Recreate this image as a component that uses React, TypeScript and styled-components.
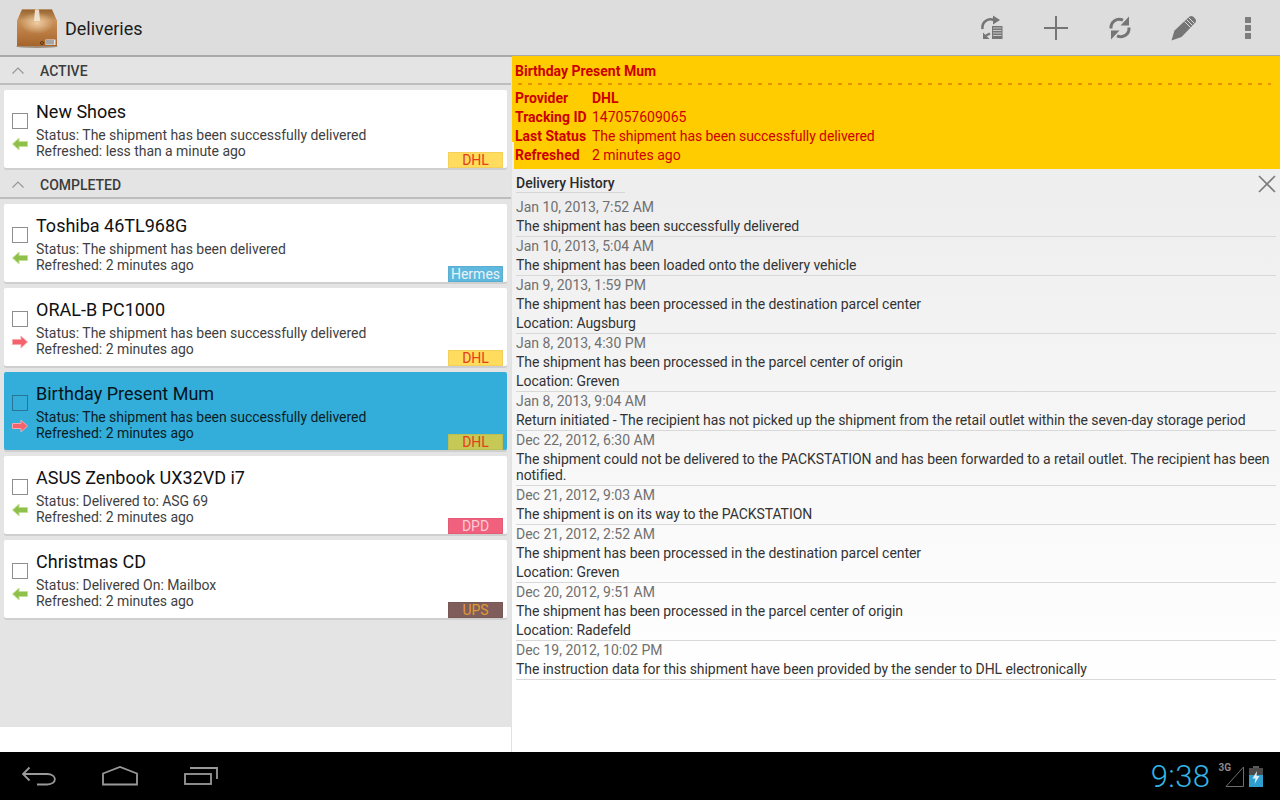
import React from 'react';
import styled, { createGlobalStyle } from 'styled-components';

const GlobalStyle = createGlobalStyle`
    html, body {
        margin: 0;
        padding: 0;
        background: #fff;
    }
    body {
        font-family: Roboto, "Liberation Sans", sans-serif;
    }
`;

const Screen = styled.div`
    width: 1280px;
    height: 800px;
    display: flex;
    flex-direction: column;
    overflow: hidden;
`;

const ActionBar = styled.header`
    height: 55px;
    flex: none;
    display: flex;
    align-items: center;
    padding-left: 15px;
    background: #dddddd;
    border-bottom: 2px solid #a9a9a9;
    position: relative;
    z-index: 2;
`;

const AppTitle = styled.h1`
    margin: 2px 0 0 6px;
    font-size: 18px;
    font-weight: 400;
    color: #1c1c1c;
    flex: 1;
`;

const ActionButton = styled.button`
    width: 64px;
    height: 55px;
    padding: 0;
    border: 0;
    background: none;
    display: flex;
    align-items: center;
    justify-content: center;
`;

const Actions = styled.div`
    display: flex;
`;

const Main = styled.main`
    flex: 1;
    display: flex;
    min-height: 0;
`;

const LeftPane = styled.section`
    width: 511px;
    flex: none;
    display: flex;
    flex-direction: column;
    background: #fff;
    border-right: 1px solid #e2e2e2;
`;

const ListArea = styled.div`
    height: 670px;
    background: #e4e4e4;
`;

const SectionHeader = styled.div`
    box-sizing: border-box;
    height: 28px;
    padding: 1px 0 0 12px;
    display: flex;
    align-items: center;
    gap: 16px;
    background: #e4e4e4;
    border-bottom: 2px solid #bdbdbd;
    font-size: 14px;
    font-weight: 500;
    color: #3c3c3c;
    margin-bottom: 5px;
`;

const Card = styled.article<{ $selected?: boolean }>`
    position: relative;
    height: 78px;
    margin: 0 4px 6px 4px;
    background: ${p => (p.$selected ? '#33add9' : '#fff')};
    border-radius: 2px;
    box-shadow: 0 2px 0 #cfcfcf;
    display: flex;
    color: ${p => (p.$selected ? '#0a1d26' : '#3f3f3f')};
`;

const CardSection = styled.div`
    & > ${Card}:last-child {
        margin-bottom: 3px;
    }
`;

const MarkerColumn = styled.div`
    width: 32px;
    flex: none;
    display: flex;
    flex-direction: column;
    align-items: center;
    padding-top: 23px;
    gap: 8px;
`;

const Checkbox = styled.span<{ $selected?: boolean }>`
    display: block;
    width: 14px;
    height: 14px;
    border: 1px solid ${p => (p.$selected ? '#2a7595' : '#8e8e8e')};
`;

const CardBody = styled.div`
    flex: 1;
    padding-top: 10px;
`;

const CardTitle = styled.div<{ $selected?: boolean }>`
    font-size: 18px;
    line-height: 24px;
    color: ${p => (p.$selected ? '#06141b' : '#111')};
    margin-bottom: 3px;
`;

const CardLine = styled.div`
    font-size: 14px;
    line-height: 16px;
    letter-spacing: -0.04px;
`;

const ProviderTag = styled.span<{ $bg: string; $fg: string }>`
    position: absolute;
    right: 4px;
    bottom: 0;
    width: 55px;
    height: 16px;
    background: ${p => p.$bg};
    box-shadow: inset 0 0 0 1px rgba(0, 0, 0, 0.05);
    color: ${p => p.$fg};
    font-size: 14px;
    line-height: 17px;
    text-align: center;
`;

const RightPane = styled.section`
    flex: 1;
    min-width: 0;
    display: flex;
    flex-direction: column;
    background: linear-gradient(#eeeeee 0%, #eeeeee 20%, #ffffff 90%);
`;

const SummaryPanel = styled.div`
    position: relative;
    z-index: 3;
    box-sizing: border-box;
    height: 113px;
    flex: none;
    margin-top: -1px;
    padding: 6px 0 0 3px;
    background: #ffcc00;
    color: #cc0000;
    font-size: 14px;

    &::after {
        content: '';
        position: absolute;
        left: 0;
        bottom: 0;
        width: 2px;
        height: 27px;
        background: #f0f0f0;
    }
`;

const SummaryTitle = styled.div`
    font-weight: 700;
    line-height: 18px;
`;

const SummaryDivider = styled.div`
    height: 2px;
    margin: 3px 9px 4px 3px;
    background: repeating-linear-gradient(90deg, #ea8f08 0 4px, transparent 4px 10px);
`;

const SummaryRow = styled.div`
    display: flex;
    line-height: 19px;
`;

const SummaryLabel = styled.span`
    width: 77px;
    flex: none;
    font-weight: 700;
`;

const SummaryValue = styled.span<{ $bold?: boolean; $tight?: boolean }>`
    font-weight: ${p => (p.$bold ? 700 : 400)};
    letter-spacing: ${p => (p.$tight ? '-0.07px' : '0')};
`;

const HistoryArea = styled.div`
    position: relative;
    padding: 5px 4px 0 4px;
`;

const HistoryHeading = styled.div`
    width: 109px;
    font-size: 14px;
    font-weight: 500;
    line-height: 18px;
    color: #2c2c2c;
    border-bottom: 1px solid #d6d6d6;
    margin-bottom: 5px;
`;

const CloseButton = styled.button`
    position: absolute;
    top: 5px;
    right: 3px;
    width: 20px;
    height: 20px;
    padding: 0;
    border: 0;
    background: none;
`;

const HistoryRow = styled.div`
    border-bottom: 1px solid #d9d9d9;
    font-size: 14px;
`;

const HistoryDate = styled.div`
    line-height: 19px;
    color: #707070;
`;

const HistoryText = styled.div`
    line-height: 16px;
    padding: 1px 0 2px;
    color: #333;
    letter-spacing: -0.06px;
`;

const NavBar = styled.footer`
    height: 48px;
    flex: none;
    background: #000;
    display: flex;
    align-items: center;
    padding-left: 22px;
`;

const NavButton = styled.div<{ $width: number }>`
    width: ${p => p.$width}px;
    display: flex;
    align-items: center;
`;

const StatusArea = styled.div`
    margin-left: auto;
    display: flex;
    align-items: center;
    padding-right: 17px;
`;

const Clock = styled.span`
    font-size: 31px;
    color: #33b5e5;
    font-weight: 300;
    letter-spacing: 0.4px;
    margin-right: 8px;
`;

const ThreeG = styled.span`
    font-size: 10px;
    font-weight: 700;
    color: #8a8a8a;
    align-self: flex-start;
    margin: 4px -6px 0 0;
    position: relative;
`;

const BatteryWrap = styled.span`
    display: flex;
    margin-left: 5px;
`;

const BoxLogo = () => (
    <svg width="44" height="44" viewBox="0 0 44 44">
        <defs>
            <linearGradient id="boxFront" x1="0" y1="0" x2="0" y2="1">
                <stop offset="0" stopColor="#d8a46c" />
                <stop offset="1" stopColor="#a7642a" />
            </linearGradient>
            <linearGradient id="boxTop" x1="0" y1="0" x2="0" y2="1">
                <stop offset="0" stopColor="#96622e" />
                <stop offset="1" stopColor="#c8965e" />
            </linearGradient>
            <radialGradient id="boxGlow" cx="0.5" cy="0.5" r="0.5">
                <stop offset="0" stopColor="#f6d8b0" stopOpacity="0.85" />
                <stop offset="1" stopColor="#f6d8b0" stopOpacity="0" />
            </radialGradient>
        </defs>
        <ellipse cx="22" cy="40.5" rx="21" ry="1.5" fill="#6b4a2a" opacity="0.55" />
        <path d="M2 15 L7 3.5 H37 L42 15 V40 H2 Z" fill="url(#boxFront)" />
        <path d="M2 15 L7 3.5 H37 L42 15 Z" fill="url(#boxTop)" />
        <ellipse cx="22" cy="17" rx="17" ry="11" fill="url(#boxGlow)" />
        <path d="M20 3.5 H24 L25 15 H19 Z" fill="#f3e8d8" opacity="0.9" />
        <rect x="30.5" y="33.5" width="10" height="5.5" fill="#e6e6e6" />
        <path d="M32 34 V38.5 M34 34 V38.5 M36 34 V38.5 M38 34 V38.5" stroke="#666" strokeWidth="1" />
        <circle cx="27" cy="37" r="1.5" fill="none" stroke="#5a3414" strokeWidth="1" />
    </svg>
);

const RefreshListIcon = () => (
    <svg width="26" height="26" viewBox="0 0 26 26" fill="none">
        <path d="M3.5 14 C2.5 7 9 2.5 15 5" stroke="#757575" strokeWidth="2.6" />
        <path d="M14 0.5 L21 5 L14 9.5 Z" fill="#757575" />
        <rect x="13" y="11" width="10.5" height="13" fill="#757575" />
        <path d="M14 13 H22.5 M14 15.5 H22.5 M14 18 H22.5 M14 20.5 H22.5" stroke="#dddddd" strokeWidth="0.8" />
        <path d="M4 24 L4 17.5 L10.5 24 Z" fill="#757575" />
        <path d="M7 20.5 L11 18.5" stroke="#757575" strokeWidth="2.2" />
    </svg>
);

const PlusIcon = () => (
    <svg width="24" height="24" viewBox="0 0 24 24">
        <path d="M12 0 V24 M0 12 H24" stroke="#757575" strokeWidth="2" />
    </svg>
);

const SyncIcon = () => (
    <svg width="22" height="24" viewBox="0 0 22 24" fill="none">
        <path d="M2 12.5 C1.5 5.5 8 1.5 14 4.2" stroke="#757575" strokeWidth="3" />
        <path d="M20 0.5 V9.5 H11.5 Z" fill="#757575" />
        <path d="M20 11.5 C20.5 18.5 14 22.5 8 19.8" stroke="#757575" strokeWidth="3" />
        <path d="M2 23.5 V14.5 H10.5 Z" fill="#757575" />
    </svg>
);

const PencilIcon = () => (
    <svg width="26" height="26" viewBox="0 0 26 26">
        <path d="M0.5 25.5 L3.5 15.5 L18.5 1.5 Q20.5 0.5 22 1.5 L24.5 4 Q25.5 5.5 24.5 7.5 L10.5 22 Z" fill="#757575" />
        <path d="M13.5 6.5 L19.5 12.5 M15.5 4.5 L21.5 10.5 M17.5 2.5 L23.5 8.5" stroke="#dddddd" strokeWidth="1" fill="none" />
    </svg>
);

const MoreIcon = () => (
    <svg width="8" height="24" viewBox="0 0 8 24">
        <rect x="1" y="1" width="6" height="6" fill="#7d7d7d" />
        <rect x="1" y="9" width="6" height="6" fill="#7d7d7d" />
        <rect x="1" y="17" width="6" height="6" fill="#7d7d7d" />
    </svg>
);

const Chevron = () => (
    <svg width="12" height="7" viewBox="0 0 12 7" fill="none">
        <path d="M0.5 6.5 L6 1 L11.5 6.5" stroke="#969696" strokeWidth="1.2" />
    </svg>
);

const DirectionArrow = ({ out }: { out?: boolean }) => (
    <svg width="16" height="14" viewBox="0 0 16 14">
        {out ? (
            <path d="M0.5 4.5 H9 V1 L15.5 7 L9 13 V9.5 H0.5 Z" fill="#f4626b" stroke="#f9a9ad" strokeWidth="1" />
        ) : (
            <path d="M15.5 4.5 H7 V1 L0.5 7 L7 13 V9.5 H15.5 Z" fill="#8fc04a" stroke="#c2de93" strokeWidth="1" />
        )}
    </svg>
);

const CloseIcon = () => (
    <svg width="20" height="20" viewBox="0 0 20 20">
        <path d="M2 2 L18 18 M18 2 L2 18" stroke="#7b7b7b" strokeWidth="1.6" />
    </svg>
);

const BackIcon = () => (
    <svg width="36" height="20" viewBox="0 0 36 20" fill="none">
        <path d="M1 8 H25 C35.5 8 35.5 18.5 25 18.5 H15" stroke="#9a9a9a" strokeWidth="1.8" />
        <path d="M7.5 1.5 L1 8 L7.5 14.5" stroke="#9a9a9a" strokeWidth="1.8" />
    </svg>
);

const HomeIcon = () => (
    <svg width="36" height="20" viewBox="0 0 36 20" fill="none">
        <path d="M1 18.5 V7.5 L18 1 L35 7.5 V18.5 Z" stroke="#9a9a9a" strokeWidth="1.8" />
    </svg>
);

const RecentIcon = () => (
    <svg width="34" height="18" viewBox="0 0 34 18" fill="none">
        <rect x="1" y="7" width="26" height="10" stroke="#9a9a9a" strokeWidth="1.8" />
        <path d="M6 1 H33 V12" stroke="#9a9a9a" strokeWidth="1.8" />
    </svg>
);

const SignalIcon = () => (
    <svg width="19" height="21" viewBox="0 0 19 21" fill="none">
        <path d="M1 20.5 L18.5 1 V20.5 Z" stroke="#6e6e6e" strokeWidth="1" />
    </svg>
);

const BatteryIcon = () => (
    <svg width="14" height="21" viewBox="0 0 14 21">
        <rect x="4" y="0" width="6" height="2" fill="#5a5a5a" />
        <rect x="0" y="2" width="14" height="19" fill="#4a4a4a" />
        <rect x="0" y="9" width="14" height="12" fill="#2f9fd0" />
        <path d="M8 5 L3.5 12.5 H6.5 L5.5 18 L10.5 10 H7.5 Z" fill="#dfeef5" />
    </svg>
);

type Delivery = {
    title: string;
    status: string;
    refreshed: string;
    provider: keyof typeof providerColors;
    out?: boolean;
    selected?: boolean;
};

const providerColors = {
    DHL: { bg: '#ffdc5e', fg: '#e2401c' },
    Hermes: { bg: '#5fb8de', fg: '#e8f4fa' },
    DPD: { bg: '#f1607c', fg: '#fbcbd6' },
    UPS: { bg: '#7f5d5b', fg: '#e09a32' },
};

const active: Delivery[] = [
    { title: 'New Shoes', status: 'The shipment has been successfully delivered', refreshed: 'less than a minute ago', provider: 'DHL' },
];

const completed: Delivery[] = [
    { title: 'Toshiba 46TL968G', status: 'The shipment has been delivered', refreshed: '2 minutes ago', provider: 'Hermes' },
    { title: 'ORAL-B PC1000', status: 'The shipment has been successfully delivered', refreshed: '2 minutes ago', provider: 'DHL', out: true },
    { title: 'Birthday Present Mum', status: 'The shipment has been successfully delivered', refreshed: '2 minutes ago', provider: 'DHL', out: true, selected: true },
    { title: 'ASUS Zenbook UX32VD i7', status: 'Delivered to: ASG 69', refreshed: '2 minutes ago', provider: 'DPD' },
    { title: 'Christmas CD', status: 'Delivered On: Mailbox', refreshed: '2 minutes ago', provider: 'UPS' },
];

const history = [
    { date: 'Jan 10, 2013, 7:52 AM', lines: ['The shipment has been successfully delivered'] },
    { date: 'Jan 10, 2013, 5:04 AM', lines: ['The shipment has been loaded onto the delivery vehicle'] },
    { date: 'Jan 9, 2013, 1:59 PM', lines: ['The shipment has been processed in the destination parcel center', 'Location: Augsburg'] },
    { date: 'Jan 8, 2013, 4:30 PM', lines: ['The shipment has been processed in the parcel center of origin', 'Location: Greven'] },
    { date: 'Jan 8, 2013, 9:04 AM', lines: ['Return initiated - The recipient has not picked up the shipment from the retail outlet within the seven-day storage period'] },
    { date: 'Dec 22, 2012, 6:30 AM', lines: ['The shipment could not be delivered to the PACKSTATION and has been forwarded to a retail outlet. The recipient has been notified.'] },
    { date: 'Dec 21, 2012, 9:03 AM', lines: ['The shipment is on its way to the PACKSTATION'] },
    { date: 'Dec 21, 2012, 2:52 AM', lines: ['The shipment has been processed in the destination parcel center', 'Location: Greven'] },
    { date: 'Dec 20, 2012, 9:51 AM', lines: ['The shipment has been processed in the parcel center of origin', 'Location: Radefeld'] },
    { date: 'Dec 19, 2012, 10:02 PM', lines: ['The instruction data for this shipment have been provided by the sender to DHL electronically'] },
];

const DeliveryCard = ({ item }: { item: Delivery }) => {
    const colors = providerColors[item.provider];
    const tagBg = item.selected ? '#c6c955' : colors.bg;
    return (
        <Card $selected={item.selected}>
            <MarkerColumn>
                <Checkbox $selected={item.selected} />
                <DirectionArrow out={item.out} />
            </MarkerColumn>
            <CardBody>
                <CardTitle $selected={item.selected}>{item.title}</CardTitle>
                <CardLine>Status: {item.status}</CardLine>
                <CardLine>Refreshed: {item.refreshed}</CardLine>
            </CardBody>
            <ProviderTag $bg={tagBg} $fg={colors.fg}>{item.provider}</ProviderTag>
        </Card>
    );
};

const App = () => (
    <Screen>
        <GlobalStyle />
        <ActionBar>
            <BoxLogo />
            <AppTitle>Deliveries</AppTitle>
            <Actions>
                <ActionButton><RefreshListIcon /></ActionButton>
                <ActionButton><PlusIcon /></ActionButton>
                <ActionButton><SyncIcon /></ActionButton>
                <ActionButton><PencilIcon /></ActionButton>
                <ActionButton><MoreIcon /></ActionButton>
            </Actions>
        </ActionBar>
        <Main>
            <LeftPane>
                <ListArea>
                    <SectionHeader><Chevron />ACTIVE</SectionHeader>
                    <CardSection>
                        {active.map(item => <DeliveryCard key={item.title} item={item} />)}
                    </CardSection>
                    <SectionHeader><Chevron />COMPLETED</SectionHeader>
                    <CardSection>
                        {completed.map(item => <DeliveryCard key={item.title} item={item} />)}
                    </CardSection>
                </ListArea>
            </LeftPane>
            <RightPane>
                <SummaryPanel>
                    <SummaryTitle>Birthday Present Mum</SummaryTitle>
                    <SummaryDivider />
                    <SummaryRow><SummaryLabel>Provider</SummaryLabel><SummaryValue $bold>DHL</SummaryValue></SummaryRow>
                    <SummaryRow><SummaryLabel>Tracking ID</SummaryLabel><SummaryValue>147057609065</SummaryValue></SummaryRow>
                    <SummaryRow><SummaryLabel>Last Status</SummaryLabel><SummaryValue $tight>The shipment has been successfully delivered</SummaryValue></SummaryRow>
                    <SummaryRow><SummaryLabel>Refreshed</SummaryLabel><SummaryValue>2 minutes ago</SummaryValue></SummaryRow>
                </SummaryPanel>
                <HistoryArea>
                    <HistoryHeading>Delivery History</HistoryHeading>
                    <CloseButton><CloseIcon /></CloseButton>
                    {history.map(entry => (
                        <HistoryRow key={entry.date}>
                            <HistoryDate>{entry.date}</HistoryDate>
                            {entry.lines.map(line => <HistoryText key={line}>{line}</HistoryText>)}
                        </HistoryRow>
                    ))}
                </HistoryArea>
            </RightPane>
        </Main>
        <NavBar>
            <NavButton $width={80}><BackIcon /></NavButton>
            <NavButton $width={82}><HomeIcon /></NavButton>
            <NavButton $width={34}><RecentIcon /></NavButton>
            <StatusArea>
                <Clock>9:38</Clock>
                <ThreeG>3G</ThreeG>
                <SignalIcon />
                <BatteryWrap><BatteryIcon /></BatteryWrap>
            </StatusArea>
        </NavBar>
    </Screen>
);

export default App;
